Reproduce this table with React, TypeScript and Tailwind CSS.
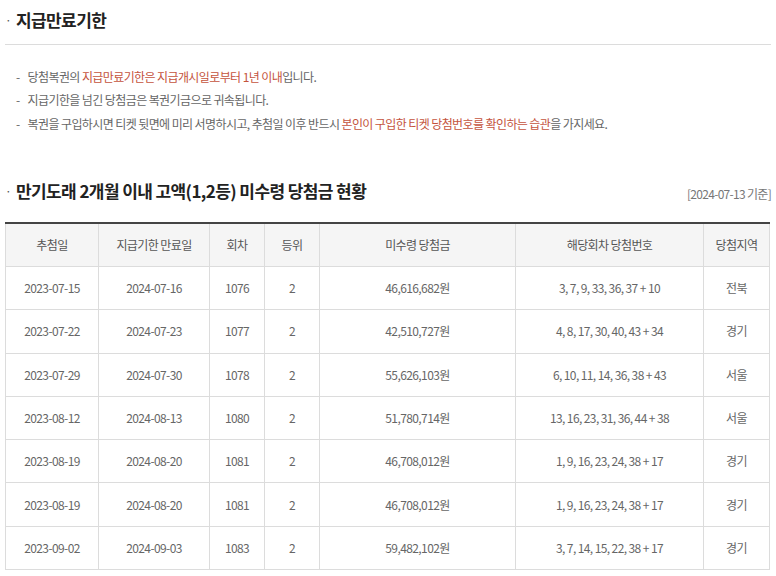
import { FC } from "react";

interface Row {
  drawDate: string;
  expireDate: string;
  round: number;
  rank: number;
  amount: string;
  numbers: string;
  region: string;
}

const rows: Row[] = [
  { drawDate: "2023-07-15", expireDate: "2024-07-16", round: 1076, rank: 2, amount: "46,616,682원", numbers: "3, 7, 9, 33, 36, 37 + 10", region: "전북" },
  { drawDate: "2023-07-22", expireDate: "2024-07-23", round: 1077, rank: 2, amount: "42,510,727원", numbers: "4, 8, 17, 30, 40, 43 + 34", region: "경기" },
  { drawDate: "2023-07-29", expireDate: "2024-07-30", round: 1078, rank: 2, amount: "55,626,103원", numbers: "6, 10, 11, 14, 36, 38 + 43", region: "서울" },
  { drawDate: "2023-08-12", expireDate: "2024-08-13", round: 1080, rank: 2, amount: "51,780,714원", numbers: "13, 16, 23, 31, 36, 44 + 38", region: "서울" },
  { drawDate: "2023-08-19", expireDate: "2024-08-20", round: 1081, rank: 2, amount: "46,708,012원", numbers: "1, 9, 16, 23, 24, 38 + 17", region: "경기" },
  { drawDate: "2023-08-19", expireDate: "2024-08-20", round: 1081, rank: 2, amount: "46,708,012원", numbers: "1, 9, 16, 23, 24, 38 + 17", region: "경기" },
  { drawDate: "2023-09-02", expireDate: "2024-09-03", round: 1083, rank: 2, amount: "59,482,102원", numbers: "3, 7, 14, 15, 22, 38 + 17", region: "경기" },
];

const headers = ["추첨일", "지급기한 만료일", "회차", "등위", "미수령 당첨금", "해당회차 당첨번호", "당첨지역"];
const widths = ["w-[93px]", "w-[111px]", "w-[55px]", "w-[55px]", "w-[196px]", "w-[188px]", "w-[66px]"];

const Title: FC<{ children: React.ReactNode }> = ({ children }) => (
  <h2 className="flex items-center text-[17px] font-bold text-[#222] tracking-[-0.6px]">
    <span className="w-[11px] text-[12px] font-normal text-[#555]">·</span>
    {children}
  </h2>
);

const Red: FC<{ children: React.ReactNode }> = ({ children }) => (
  <span className="text-[#c4533d]">{children}</span>
);

export default function App() {
  return (
    <div className="w-[776px] h-[576px] overflow-hidden bg-white px-[5px] font-['Noto_Sans_CJK_KR',sans-serif]">
      {/* 지급만료기한 */}
      <div className="pt-[7px] pb-[11px] border-b border-[#dcdcdc]">
        <Title>지급만료기한</Title>
      </div>

      <ul className="pt-[20px] pl-[11px] text-[12px] leading-[23.5px] text-[#666] tracking-[-0.6px]">
        <li>
          <span className="mr-[8px]">-</span>
          당첨복권의 <Red>지급만료기한은 지급개시일로부터 1년 이내</Red>입니다.
        </li>
        <li>
          <span className="mr-[8px]">-</span>
          지급기한을 넘긴 당첨금은 복권기금으로 귀속됩니다.
        </li>
        <li>
          <span className="mr-[8px]">-</span>
          복권을 구입하시면 티켓 뒷면에 미리 서명하시고, 추첨일 이후 반드시 <Red>본인이 구입한 티켓 당첨번호를 확인하는 습관</Red>을 가지세요.
        </li>
      </ul>

      {/* 고액 미수령 당첨금 현황 */}
      <div className="mt-[43px] flex items-end justify-between">
        <Title>만기도래 2개월 이내 고액(1,2등) 미수령 당첨금 현황</Title>
        <span className="text-[12px] text-[#777] tracking-[-0.7px] mb-[1px]">[2024-07-13 기준]</span>
      </div>

      <table className="mt-[18px] w-[764px] table-fixed border-collapse border-t-2 border-t-[#444] text-[12px] text-[#666] tracking-[-0.6px]">
        <thead>
          <tr className="bg-[#f5f5f5]">
            {headers.map((h, i) => (
              <th key={h} className={`${widths[i]} h-[44px] border border-[#dcdcdc] border-t-0 font-normal text-[#555]`}>
                {h}
              </th>
            ))}
          </tr>
        </thead>
        <tbody>
          {rows.map((r, i) => (
            <tr key={i} className="h-[43.3px] text-center">
              <td className="border border-[#dcdcdc]">{r.drawDate}</td>
              <td className="border border-[#dcdcdc]">{r.expireDate}</td>
              <td className="border border-[#dcdcdc]">{r.round}</td>
              <td className="border border-[#dcdcdc]">{r.rank}</td>
              <td className="border border-[#dcdcdc]">{r.amount}</td>
              <td className="border border-[#dcdcdc]">{r.numbers}</td>
              <td className="border border-[#dcdcdc]">{r.region}</td>
            </tr>
          ))}
        </tbody>
      </table>
    </div>
  );
}
